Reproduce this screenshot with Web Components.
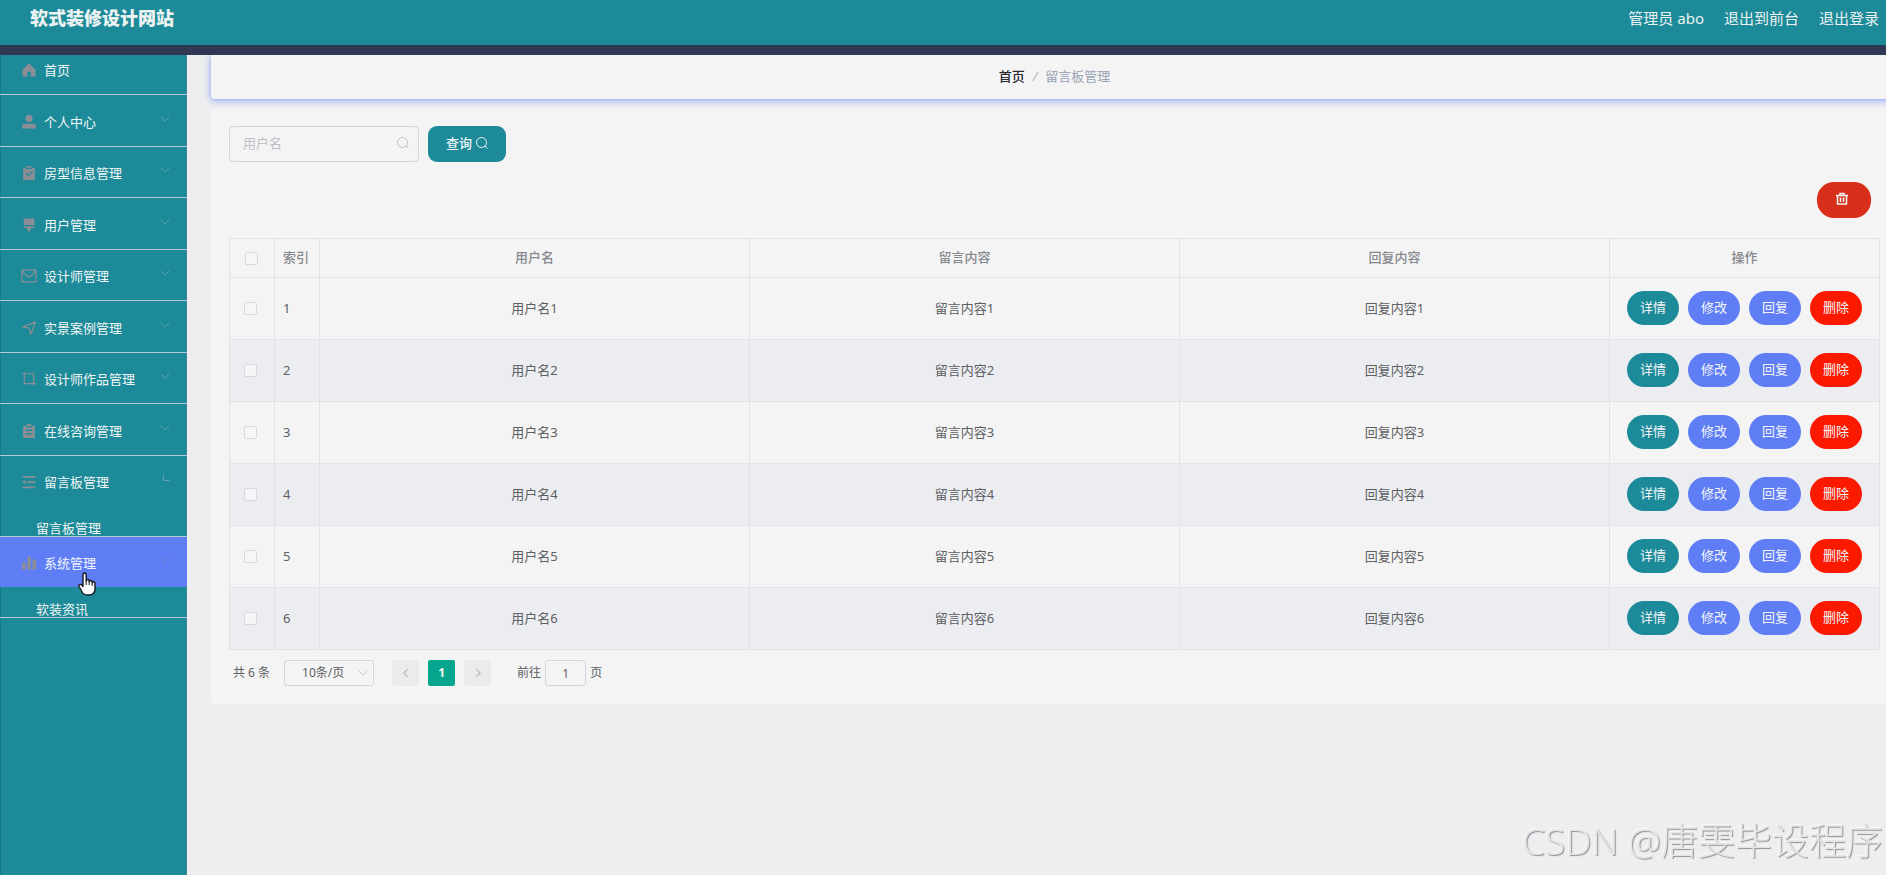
<!DOCTYPE html>
<html lang="zh-CN">
<head>
<meta charset="UTF-8">
<meta name="viewport" content="width=device-width, initial-scale=1">
<title>软式装修设计网站</title>
<style>
  :root {
    --primary: #1c8a98;
    --accent: #5f7ef6;
    --danger: #fb1900;
    --panel: #f4f4f4;
    --page: #edeef0;
    --line: #e2e3e7;
    --text: #5d5f63;
  }

  body {
    margin: 0;
    background: var(--page);
    color: var(--text);
    font: 13px/20px "Noto Sans", "Noto Sans CJK SC", sans-serif;
  }
</style>
</head>
<body>
<admin-layout>
  <site-header slot="header" heading="软式装修设计网站">
    <span>管理员 abo</span>
    <a href="#front">退出到前台</a>
    <a href="#logout">退出登录</a>
  </site-header>

  <side-menu slot="aside">
    <menu-entry icon="home" label="首页" leaf></menu-entry>
    <menu-entry icon="user" label="个人中心"></menu-entry>
    <menu-entry icon="check" label="房型信息管理"></menu-entry>
    <menu-entry icon="brush" label="用户管理"></menu-entry>
    <menu-entry icon="mail" label="设计师管理"></menu-entry>
    <menu-entry icon="send" label="实景案例管理"></menu-entry>
    <menu-entry icon="crop" label="设计师作品管理"></menu-entry>
    <menu-entry icon="order" label="在线咨询管理"></menu-entry>
    <menu-entry icon="fold" label="留言板管理" state="opening"><a href="#board">留言板管理</a></menu-entry>
    <menu-entry icon="chart" label="系统管理" state="closing" active><a href="#news">软装资讯</a></menu-entry>
  </side-menu>

  <crumb-bar><a href="#home">首页</a><span slot="current">留言板管理</span></crumb-bar>
  <content-panel>
    <search-bar></search-bar>
    <message-table rows="6"></message-table>
    <page-bar total="6"></page-bar>
  </content-panel>
</admin-layout>
<corner-mark>CSDN @唐雯毕设程序</corner-mark>

<script>
const icons = {
  home: '<path fill="currentColor" d="M12 1 1 11v12h8v-8h6v8h8V11z"/>',
  user: '<circle cx="12" cy="6" r="6" fill="currentColor"/><path fill="currentColor" d="M0 23v-3q0-5 5-5h14q5 0 5 5v3z"/>',
  check: '<path fill="currentColor" fill-rule="evenodd" d="M2 3h5v2h10V3h5v21H2zm4 10 5 5 8-8-1-2-7 7-3-3zM8 0h8v3H8z"/>',
  brush: '<path fill="currentColor" d="M3 1h18v11H3zM3 14h18v3h-6v3l-3 4-3-4v-3H3z"/>',
  mail: '<path fill="none" stroke="currentColor" stroke-width="2" d="M0 2h24v20H0zM1 3q2 5 11 11 9-6 11-11"/>',
  send: '<path fill="none" stroke="currentColor" stroke-width="2" stroke-linejoin="round" d="M1 10 23 2l-8 21-3-11z"/>',
  crop: '<path fill="none" stroke="currentColor" stroke-width="2" d="M4 0v20h20M0 3h20v21"/>',
  order: '<path fill="currentColor" fill-rule="evenodd" d="M2 3h5v3h10V3h5v21H2zm4 7v2h12v-2zm0 6v2h12v-2zM8 0h8v4H8z"/>',
  fold: '<path fill="none" stroke="currentColor" stroke-width="3" d="M1 3h22M8 12h15M1 21h22"/><path fill="currentColor" d="m1 12 5-4v8z"/>',
  chart: '<path fill="currentColor" d="M0 11h6v12H0zM9 1h6v22H9zM18 6h6v17h-6z"/>',
  search: '<circle cx="11" cy="11" r="10" fill="none" stroke="currentColor" stroke-width="2"/><path stroke="currentColor" stroke-width="2" d="m18 18 5 5"/>',
  trash: '<path fill="none" stroke="currentColor" stroke-width="3" d="M0 5h24M8 4V1h8v3M3 5v17h18V5M9 9v9M15 9v9"/>',
  down: '<path fill="none" stroke="currentColor" stroke-width="2" d="m2 7 10 10L22 7"/>',
  left: '<path fill="none" stroke="currentColor" stroke-width="3" d="m16 3-9 9 9 9"/>',
  right: '<path fill="none" stroke="currentColor" stroke-width="3" d="m8 3 9 9-9 9"/>'
};

class BaseElement extends HTMLElement {
  constructor() {
    super();
    this.attachShadow({ mode: "open" });
  }

  connectedCallback() {
    const template = document.createElement("template");
    template.innerHTML = this.html();
    this.shadowRoot.replaceChildren(template.content.cloneNode(true));
  }
}

class UiIcon extends BaseElement {
  html() {
    return `
      <style>
        :host { display: inline-block; width: 12px; height: 12px; flex: none; }
        svg { display: block; width: 100%; height: 100%; overflow: visible; }
      </style>
      <svg viewBox="0 0 24 24" aria-hidden="true">${icons[this.getAttribute("name")]}</svg>`;
  }
}

class AdminLayout extends BaseElement {
  html() {
    return `
      <style>
        :host {
          display: grid;
          grid-template: auto 1fr / 187px minmax(0, 1fr);
          min-height: 100vh;
        }
        slot[name="header"] { display: block; grid-column: 1 / -1; }
        slot[name="aside"] { display: grid; }
        main { overflow: hidden; padding-left: 24px; }
        /* the content runs a little past the right edge of the window */
        .wide { display: grid; gap: 9px; margin-right: -12px; }
      </style>
      <slot name="header"></slot>
      <slot name="aside"></slot>
      <main><div class="wide"><slot></slot></div></main>`;
  }
}

class SiteHeader extends BaseElement {
  html() {
    return `
      <style>
        :host { display: block; background: var(--primary); border-bottom: 10px solid #303854; color: #edf3f3; }
        header { display: flex; justify-content: space-between; align-items: center; height: 35px; padding: 0 7px 10px 30px; }
        h1 { margin: 0; font-size: 18px; line-height: 26px; font-weight: 900; }
        nav { display: flex; gap: 20px; font-size: 15px; line-height: 24px; }
        ::slotted(a) { color: inherit; text-decoration: none; }
      </style>
      <header>
        <h1>${this.getAttribute("heading")}</h1>
        <nav><slot></slot></nav>
      </header>`;
  }
}

class SideMenu extends BaseElement {
  html() {
    return `
      <style>
        :host { display: block; overflow: hidden; background: var(--primary); box-shadow: inset 1px 0 #187986, inset -1px 0 #3d8792; }
        /* scrolled a few pixels under the header */
        nav { margin-top: -11px; }
        ::slotted(menu-entry:nth-child(even)) { --head: 51px; }
        ::slotted(menu-entry[active]) { --head: 50px; }
      </style>
      <nav><slot></slot></nav>`;
  }
}

class MenuEntry extends BaseElement {
  html() {
    const leaf = this.hasAttribute("leaf");
    const arrow = leaf ? "" : '<ui-icon class="arrow" name="down"></ui-icon>';
    const inner = `<ui-icon name="${this.getAttribute("icon")}"></ui-icon>
      <span>${this.getAttribute("label")}</span>${arrow}`;
    const head = leaf ? `<a class="head" href="#home">${inner}</a>` : `<button class="head" type="button">${inner}</button>`;
    const hand = this.hasAttribute("active") ? `
      <svg class="hand" viewBox="0 0 18 24" aria-hidden="true">
        <path fill="#fff" stroke="#15171f" stroke-width="1.4" stroke-linejoin="round" d="M5 13V3q0-2 1.600-2T8.200 3v6q0-1.500 1.500-1.500t1.500 1.500v1q0-1.500 1.500-1.500T14.200 10v1q0-1.200 1.400-1.200T17 11.500V17q0 6-6.500 6T3.500 18.500L1 14.500q-.6-1.500.8-2t3.200 2z"/>
        <path fill="none" stroke="#15171f" d="M8.200 9v4M11.200 10v3M14.200 11v3"/>
      </svg>` : "";
    return `
      <style>
        :host { display: block; position: relative; border-bottom: 1px solid #b3cbd0; color: #f1f6f6; }
        .head {
          display: flex;
          align-items: center;
          gap: 8px;
          box-sizing: border-box;
          width: 100%;
          height: var(--head, 50px);
          padding: 2px 17px 0 22px;
          border: 0;
          background: none;
          color: inherit;
          font: inherit;
          text-align: left;
          text-decoration: none;
          cursor: pointer;
        }
        :host([active]) .head { background: var(--accent); }
        ui-icon { width: 14px; height: 14px; color: #8c8e96; }
        .arrow { width: 10px; height: 10px; margin: 0 0 6px auto; color: #6fa3ab; }
        :host([state="opening"]) .arrow { transform: rotate(45deg); }
        :host([state="closing"]) .arrow { transform: rotate(135deg); color: #747fc6; }
        ::slotted(a) { display: block; padding: 14px 0 0 36px; line-height: 16px; color: inherit; text-decoration: none; }
        .hand { position: absolute; left: 78px; top: 35px; z-index: 2; width: 18px; height: 24px; }
      </style>
      ${head}<slot></slot>${hand}`;
  }
}

class CrumbBar extends BaseElement {
  html() {
    return `
      <style>
        :host { display: block; background: var(--panel); border-radius: 0 0 4px 4px; box-shadow: 0 1px 7px #8099f6; }
        nav { display: flex; justify-content: center; gap: 8px; padding: 11px 0 13px; }
        ::slotted(a) { color: #26282d; font-weight: 500; text-decoration: none; }
        i { color: #b4b8c0; }
        ::slotted(span) { color: #97a2b3; }
      </style>
      <nav><slot></slot><i>/</i><slot name="current"></slot></nav>`;
  }
}

class ContentPanel extends BaseElement {
  html() {
    return `
      <style>
        :host { display: block; position: relative; padding: 18px; border-radius: 4px; background: var(--panel); }
      </style>
      <slot></slot>`;
  }
}

class PillButton extends BaseElement {
  html() {
    const name = this.getAttribute("name");
    const label = name ? ` aria-label="${name}"` : "";
    return `
      <style>
        :host { display: inline-block; }
        button {
          display: flex;
          align-items: center;
          justify-content: center;
          gap: 4px;
          box-sizing: border-box;
          width: var(--w, 52px);
          height: var(--h, 34px);
          padding: 0 0 2px;
          border: 0;
          border-radius: var(--r, 17px);
          background: var(--bg, var(--accent));
          color: #f3f5f8;
          font: inherit;
          font-weight: var(--weight, 400);
          cursor: pointer;
        }
      </style>
      <button type="button"${label}><slot></slot></button>`;
  }
}

class SearchBar extends BaseElement {
  html() {
    return `
      <style>
        :host { display: block; }
        form { display: flex; gap: 9px; }
        label { display: flex; align-items: center; box-sizing: border-box; width: 190px; height: 36px; padding: 0 9px 2px 13px; border: 1px solid #d4d6da; border-radius: 4px; color: #bdc0c6; }
        input { flex: 1; min-width: 0; padding: 0; border: 0; outline: 0; background: none; color: var(--text); font: inherit; }
        input::placeholder { color: #bdc0c6; opacity: 1; }
        .query { --w: 78px; --h: 36px; --r: 9px; --bg: var(--primary); --weight: 500; }
        .tools { display: flex; justify-content: flex-end; padding: 20px 9px; }
        .remove { --w: 54px; --h: 36px; --bg: #d82f1b; }
        .remove ui-icon { margin-right: 4px; }
      </style>
      <form>
        <label><input type="text" placeholder="用户名" aria-label="用户名"><ui-icon name="search"></ui-icon></label>
        <pill-button class="query">查询<ui-icon name="search"></ui-icon></pill-button>
      </form>
      <div class="tools"><pill-button class="remove" name="批量删除"><ui-icon name="trash"></ui-icon></pill-button></div>`;
  }
}

class MessageTable extends BaseElement {
  html() {
    const count = Number(this.getAttribute("rows"));
    let rows = "";
    for (let i = 1; i <= count; i++) {
      rows += `
        <tr>
          <td class="pick"><input type="checkbox" aria-label="选择第${i}行"></td>
          <td class="index">${i}</td>
          <td>用户名${i}</td>
          <td>留言内容${i}</td>
          <td>回复内容${i}</td>
          <td>
            <div class="actions">
              <pill-button class="detail">详情</pill-button>
              <pill-button>修改</pill-button>
              <pill-button>回复</pill-button>
              <pill-button class="delete">删除</pill-button>
            </div>
          </td>
        </tr>`;
    }
    return `
      <style>
        :host { display: block; }
        table { width: 100%; table-layout: fixed; border-collapse: separate; border-spacing: 0; border: solid var(--line); border-width: 1px 0 0 1px; }
        .narrow { width: 45px; }
        .wide { width: 270px; }
        th, td { box-sizing: border-box; padding: 0 0 2px; border: solid var(--line); border-width: 0 1px 1px 0; text-align: center; }
        th { height: 39px; color: #87898e; font-weight: 500; }
        td { height: 62px; }
        tbody tr:nth-child(even) { background: #ecedf1; }
        .index { padding-left: 8px; text-align: left; }
        input { appearance: none; display: block; box-sizing: border-box; width: 13px; height: 13px; margin: 0 auto; border: 1px solid #d6d9de; border-radius: 2px; background: #f5f6f7; }
        thead .pick { padding: 0 2px 0 0; }
        tbody .pick { padding: 0 4px 0 0; }
        .actions { display: flex; justify-content: center; gap: 9px; }
        .detail { --bg: var(--primary); }
        .delete { --bg: var(--danger); }
      </style>
      <table>
        <colgroup><col class="narrow"><col class="narrow"><col><col><col><col class="wide"></colgroup>
        <thead>
          <tr>
            <th class="pick"><input type="checkbox" aria-label="全选"></th>
            <th class="index">索引</th>
            <th>用户名</th>
            <th>留言内容</th>
            <th>回复内容</th>
            <th>操作</th>
          </tr>
        </thead>
        <tbody>${rows}</tbody>
      </table>`;
  }
}

class PageBar extends BaseElement {
  html() {
    return `
      <style>
        :host { display: flex; align-items: center; padding: 10px 0 0 4px; font-size: 12px; }
        .size { display: grid; align-items: center; width: 90px; margin: 0 18px 0 14px; }
        .size > * { grid-area: 1 / 1; }
        .size ui-icon { width: 10px; height: 10px; justify-self: end; margin-right: 6px; color: #bdc0c6; pointer-events: none; }
        select, input { box-sizing: border-box; height: 26px; border: 1px solid #d4d6da; border-radius: 3px; background: none; color: var(--text); font: inherit; }
        select { appearance: none; width: 100%; padding: 0 0 0 17px; }
        .pager { display: flex; gap: 9px; margin-right: 26px; }
        .pager button { display: grid; place-items: center; width: 27px; height: 26px; padding: 0; border: 0; border-radius: 2px; background: #ebebec; color: #b9bbc0; font: inherit; }
        .pager .current { background: #04a78d; color: #f4f4f4; font-weight: 700; }
        .pager ui-icon { width: 10px; height: 10px; }
        label { display: flex; align-items: center; gap: 4px; }
        input { width: 41px; padding: 0; text-align: center; }
      </style>
      <span>共 ${this.getAttribute("total")} 条</span>
      <div class="size">
        <select aria-label="每页条数"><option>10条/页</option></select>
        <ui-icon name="down"></ui-icon>
      </div>
      <div class="pager">
        <button type="button" aria-label="上一页"><ui-icon name="left"></ui-icon></button>
        <button type="button" class="current">1</button>
        <button type="button" aria-label="下一页"><ui-icon name="right"></ui-icon></button>
      </div>
      <label>前往 <input type="text" value="1"> 页</label>`;
  }
}

class CornerMark extends BaseElement {
  html() {
    return `
      <style>
        :host {
          position: fixed;
          right: 3px;
          bottom: 10px;
          color: #e4e5e6;
          font-family: "Liberation Sans", "Noto Sans CJK SC", sans-serif;
          font-size: 37px;
          line-height: 48px;
          font-weight: 300;
          text-shadow: 1px 1px 1px #8f9093, -1px -1px 0 #f8f8f8;
          white-space: nowrap;
          pointer-events: none;
        }
        :host { font-family: "Noto Sans", "Noto Sans CJK SC", sans-serif; }
      </style>
      <slot></slot>`;
  }
}

customElements.define("ui-icon", UiIcon);
customElements.define("pill-button", PillButton);
customElements.define("admin-layout", AdminLayout);
customElements.define("site-header", SiteHeader);
customElements.define("side-menu", SideMenu);
customElements.define("menu-entry", MenuEntry);
customElements.define("crumb-bar", CrumbBar);
customElements.define("content-panel", ContentPanel);
customElements.define("search-bar", SearchBar);
customElements.define("message-table", MessageTable);
customElements.define("page-bar", PageBar);
customElements.define("corner-mark", CornerMark);
</script>
</body>
</html>
